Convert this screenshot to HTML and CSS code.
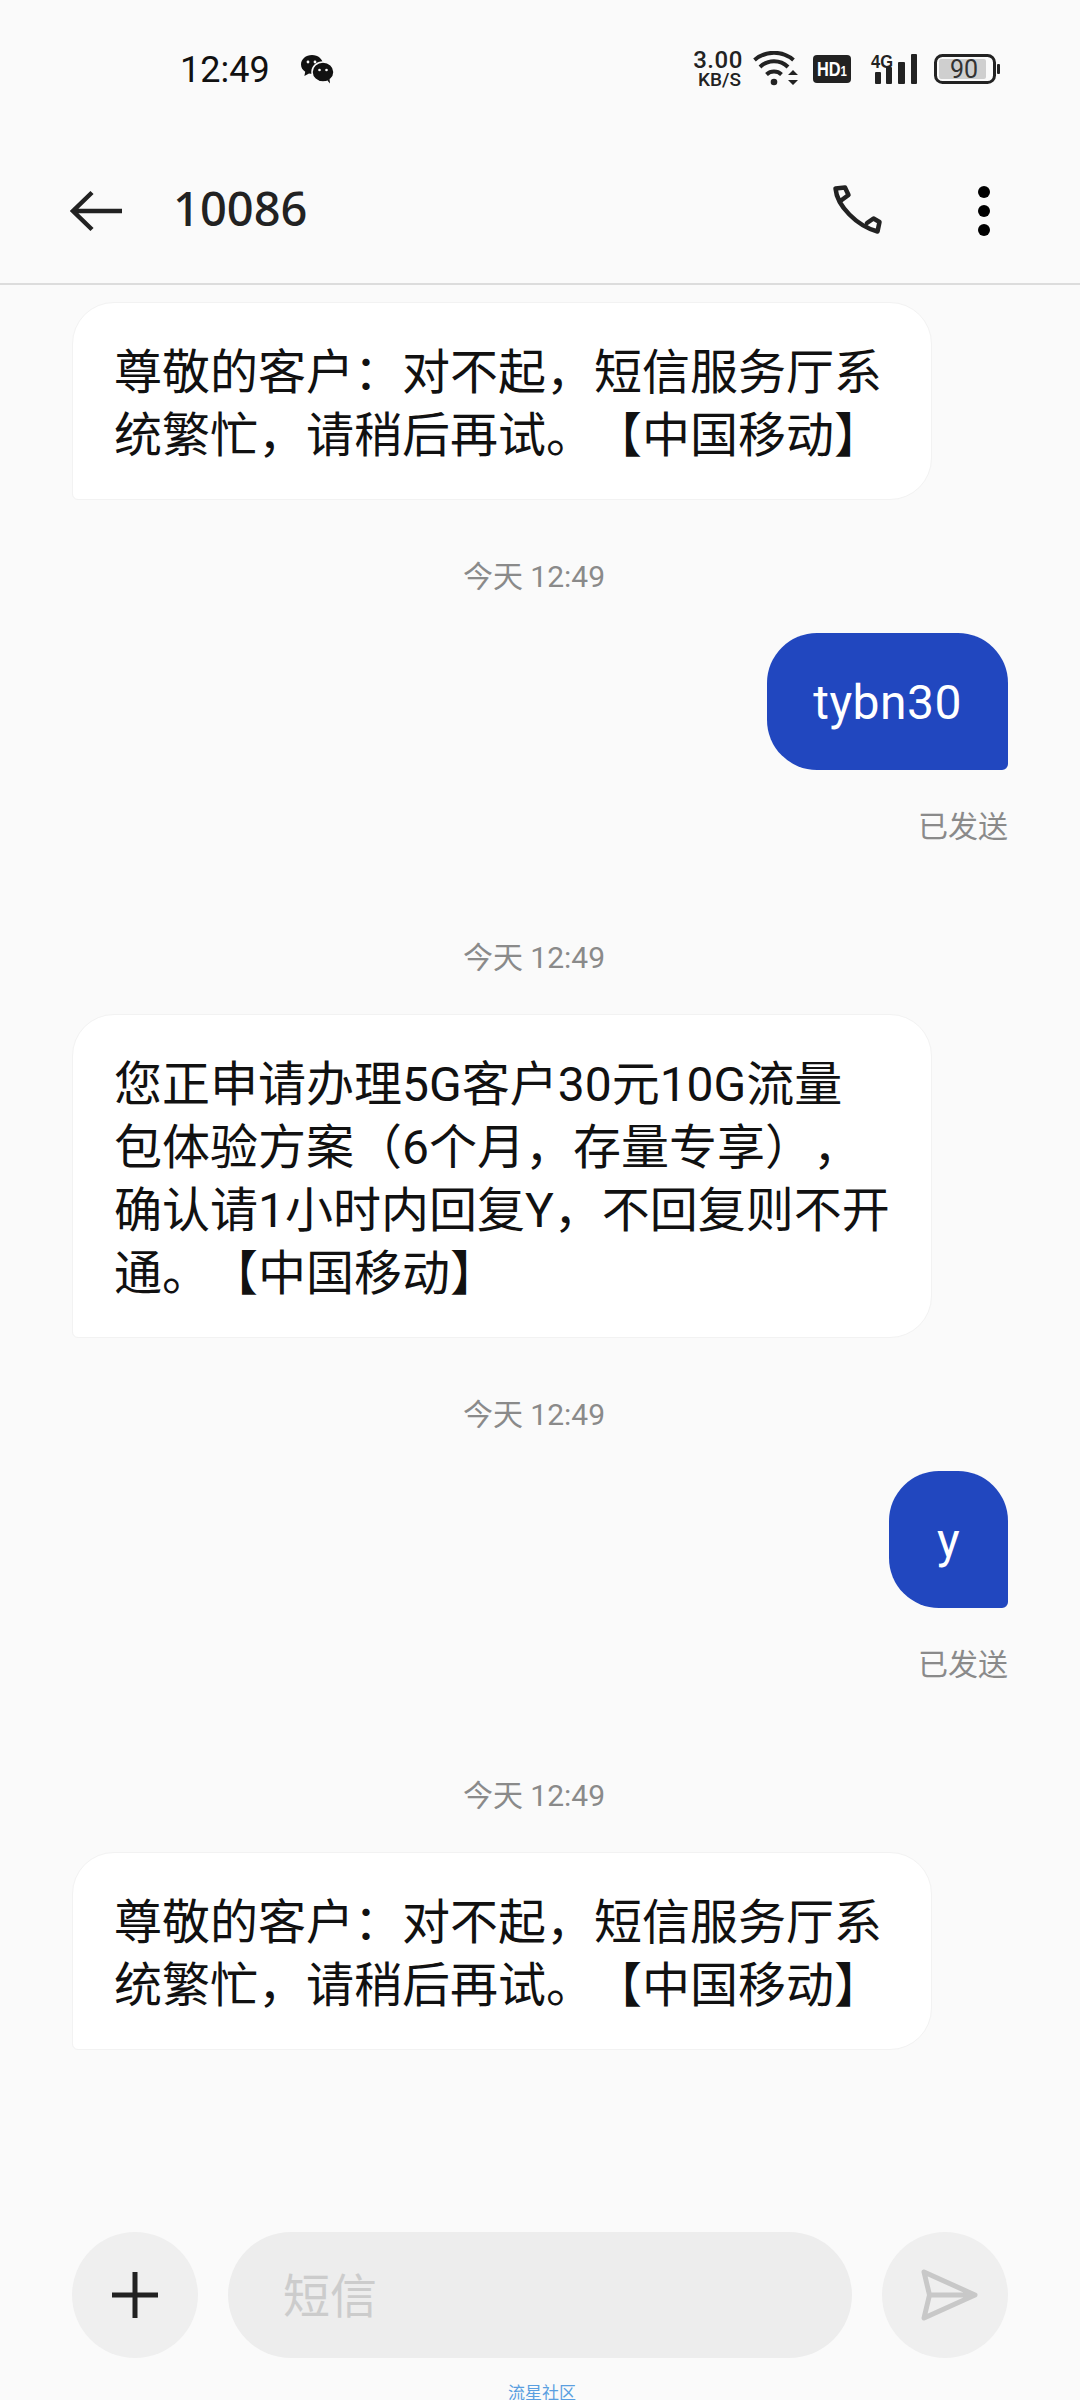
FILE: index.html
```html
<!DOCTYPE html>
<html lang="zh-CN">
<head>
    <meta charset="UTF-8">
    <meta name="viewport" content="width=device-width, initial-scale=1.0">
    <title>10086</title>
    <link rel="stylesheet" href="styles.css">
</head>
<body>
    <div class="status-bar">
        <span class="clock">12:49</span>
        <svg class="wechat" width="36" height="30" viewBox="0 0 36 30">
            <path d="M13 1C6.9 1 2 5.2 2 10.4c0 3 1.7 5.6 4.2 7.3L5.4 22l4.6-2.6c1 .3 2 .4 3 .4 6.100 0 11-4.200 11-9.400S19.100 1 13 1z" fill="#111"/>
            <ellipse cx="24" cy="18" rx="11" ry="10" fill="#111" stroke="#fafafa" stroke-width="1.500"/>
            <path d="M28 26l3 3.500-.5-5z" fill="#111"/>
            <circle cx="9" cy="8" r="1.400" fill="#fafafa"/>
            <circle cx="16" cy="8" r="1.400" fill="#fafafa"/>
            <circle cx="20.500" cy="16" r="1.300" fill="#fafafa"/>
            <circle cx="27.500" cy="16" r="1.300" fill="#fafafa"/>
        </svg>
        <div class="status-right">
            <div class="speed">
                <span class="speed-num">3.00</span>
                <span class="speed-unit">KB/S</span>
            </div>
            <svg class="wifi" width="46" height="36" viewBox="0 0 46 36">
                <circle cx="21" cy="31" r="3.300" fill="#222"/>
                <path d="M13.500 23.500a11 11 0 0 1 15 0" fill="none" stroke="#222" stroke-width="4"/>
                <path d="M7 16a20 20 0 0 1 28 0" fill="none" stroke="#222" stroke-width="4"/>
                <path d="M1.500 9a30 30 0 0 1 39 0" fill="none" stroke="#222" stroke-width="4"/>
                <path d="M40 19l5 5H35zM40 34l5-5H35z" fill="#222"/>
            </svg>
            <svg class="hd" width="38" height="28" viewBox="0 0 38 28">
                <rect width="38" height="28" rx="4" fill="#222"/>
                <text x="4" y="21" class="hd-text" textLength="30" lengthAdjust="spacingAndGlyphs">HD<tspan class="hd-one">1</tspan></text>
            </svg>
            <svg class="signal" width="48" height="36" viewBox="0 -4 48 36">
                <text x="1" y="15" class="net-text" textLength="22" lengthAdjust="spacingAndGlyphs">4G</text>
                <rect x="5" y="19" width="6" height="12" rx="1" fill="#222"/>
                <rect x="16" y="14" width="6" height="17" rx="1" fill="#222"/>
                <rect x="28" y="9" width="7" height="22" rx="1" fill="#222"/>
                <rect x="41" y="1" width="6" height="30" rx="1" fill="#222"/>
            </svg>
            <svg class="battery" width="66" height="30" viewBox="0 0 66 30">
                <rect x="1.500" y="1.500" width="59" height="27" rx="7" fill="none" stroke="#222" stroke-width="3"/>
                <rect x="5" y="5" width="47" height="20" rx="2" fill="#cfcfcf"/>
                <rect x="63" y="10" width="3" height="10" rx="1" fill="#222"/>
                <text x="30" y="24" text-anchor="middle" class="battery-text">90</text>
            </svg>
        </div>
    </div>

    <div class="top-bar">
        <svg class="back" width="54" height="42" viewBox="0 0 54 42">
            <path d="M22 2.500L3 21l19 18.500M3 21h49" fill="none" stroke="#222" stroke-width="4.500"/>
        </svg>
        <div class="contact">10086</div>
        <svg class="phone" width="52" height="53" viewBox="0 0 52 53">
            <path d="M3.500 4.500L13 3.500l3.500 7.500-7.500 5.500M3.500 4.500C5 22 25 42 45.500 47.500L47.500 38l-6-3.500-6.500 4.500" fill="none" stroke="#222" stroke-width="4.500" stroke-linejoin="round" stroke-linecap="round"/>
        </svg>
        <svg class="more" width="12" height="50" viewBox="0 0 12 50">
            <circle cx="6" cy="6" r="6"/>
            <circle cx="6" cy="25" r="6"/>
            <circle cx="6" cy="44" r="6"/>
        </svg>
    </div>

    <div class="messages">
        <div class="bubble">尊敬的客户：对不起，短信服务厅系<br>统繁忙，请稍后再试。【中国移动】</div>

        <div class="time">今天 12:49</div>
        <div class="bubble mine">tybn30</div>
        <div class="sent">已发送</div>

        <div class="time">今天 12:49</div>
        <div class="bubble">您正申请办理5G客户30元10G流量<br>包体验方案（6个月，存量专享），<br>确认请1小时内回复Y，不回复则不开<br>通。【中国移动】</div>

        <div class="time">今天 12:49</div>
        <div class="bubble mine">y</div>
        <div class="sent">已发送</div>

        <div class="time">今天 12:49</div>
        <div class="bubble">尊敬的客户：对不起，短信服务厅系<br>统繁忙，请稍后再试。【中国移动】</div>
    </div>

    <div class="composer">
        <div class="round-btn">
            <svg width="46" height="46" viewBox="0 0 46 46">
                <path d="M23 0v46M0 23h46" stroke="#222" stroke-width="5"/>
            </svg>
        </div>
        <div class="sms-input">短信</div>
        <div class="round-btn">
            <svg class="send" width="58" height="52" viewBox="0 0 58 52">
                <path d="M4 3l51 23L4 49l5.500-23zM9.500 26H55" fill="none" stroke="#c8c8c8" stroke-width="5" stroke-linejoin="round"/>
            </svg>
        </div>
    </div>
    <div class="watermark">流星社区</div>
</body>
</html>
```

FILE: styles.css
```css
*{
    margin: 0;
    padding: 0;
    box-sizing: border-box;
    font-family: Roboto, 'Noto Sans CJK SC', sans-serif;
}
body{
    display: flex;
    flex-direction: column;
    height: 2400px;
    overflow: hidden;
    background-color: #fafafa;
}

/* status bar */
.status-bar{
    display: flex;
    align-items: center;
    height: 138px;
    padding: 0 80px 0 180px;
    flex-shrink: 0;
}
.clock{
    margin-top: 2px;
    font-size: 36px;
    color: #111;
}
.wechat{
    margin-left: 29px;
}
.status-right{
    display: flex;
    align-items: center;
    margin-left: auto;
}
.speed{
    display: flex;
    flex-direction: column;
    align-items: center;
    width: 52px;
    color: #222;
}
.speed-num{
    font-size: 24px;
    font-weight: 500;
    line-height: 21px;
    letter-spacing: 0.5px;
}
.speed-unit{
    padding-left: 3px;
    font-size: 19px;
    font-weight: 500;
    line-height: 18px;
}
.wifi{
    margin-left: 9px;
}
.hd{
    margin-left: 14px;
}
.hd-text{
    font-family: 'Liberation Sans', sans-serif;
    font-size: 20px;
    font-weight: 700;
    fill: #fff;
}
.hd-one{
    font-family: 'Liberation Sans', sans-serif;
    font-size: 14px;
}
.signal{
    margin: -4px 0 0 19px;
}
.net-text{
    font-family: 'Liberation Sans', sans-serif;
    font-size: 19px;
    font-weight: 700;
    fill: #222;
}
.battery{
    margin-left: 16px;
}
.battery-text{
    font-size: 25px;
    fill: #333;
}

/* title bar */
.top-bar{
    display: flex;
    align-items: center;
    height: 147px;
    padding: 0 90px 0 70px;
    border-bottom: 2px solid #dcdcdc;
    flex-shrink: 0;
}
.contact{
    margin: 0 0 5px 49px;
    font-family: 'Noto Sans', sans-serif;
    font-size: 47px;
    font-weight: 500;
    color: #222;
}
.phone{
    margin-left: auto;
    margin-right: -1px;
}
.more{
    margin-left: 95px;
}

/* messages */
.messages{
    flex: 1;
    display: flex;
    flex-direction: column;
    align-items: flex-start;
    padding: 17px 72px 0;
    overflow: hidden;
}
.bubble{
    width: 860px;
    padding: 38px 40px 32px 41px;
    font-size: 48px;
    line-height: 63px;
    white-space: nowrap;
    text-spacing-trim: space-all;
    color: #111;
    background-color: #fff;
    border: 1px solid #f2f2f2;
    border-radius: 42px 42px 42px 6px;
}
.bubble.mine{
    width: auto;
    min-width: 119px;
    align-self: flex-end;
    padding: 38px 46px 36px;
    text-align: center;
    letter-spacing: 0.5px;
    color: #fff;
    background-color: #2147bf;
    border: none;
    border-radius: 50px 50px 6px 50px;
}
.time{
    align-self: center;
    height: 40px;
    margin: 57px 12px 36px 0;
    font-size: 30px;
    line-height: 40px;
    color: #8a8a8a;
}
.sent{
    align-self: flex-end;
    height: 40px;
    margin: 37px 0 34px;
    font-size: 30px;
    line-height: 40px;
    color: #8a8a8a;
}

/* bottom input */
.composer{
    display: flex;
    align-items: center;
    gap: 30px;
    height: 126px;
    padding: 0 72px;
    flex-shrink: 0;
}
.round-btn{
    display: flex;
    justify-content: center;
    align-items: center;
    width: 126px;
    height: 126px;
    border-radius: 50%;
    background-color: #efefef;
    flex-shrink: 0;
}
.send{
    margin-left: 8px;
}
.sms-input{
    flex: 1;
    height: 126px;
    padding-left: 55px;
    font-size: 47px;
    line-height: 130px;
    color: #cccccc;
    background-color: #ededed;
    border-radius: 63px;
}
.watermark{
    height: 42px;
    padding: 24px 0 0 508px;
    font-size: 17px;
    line-height: 22px;
    white-space: nowrap;
    color: #5a9fe0;
    flex-shrink: 0;
}
```
